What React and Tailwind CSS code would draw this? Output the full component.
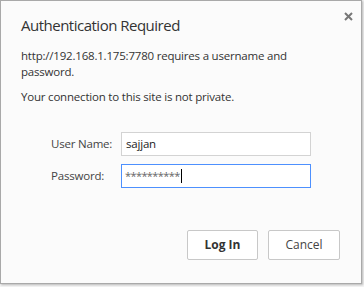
export default function App() {
  const font = { fontFamily: '"Open Sans", "Noto Sans", sans-serif' };
  return (
    <div className="w-[364px] h-[287px] bg-[#f4f4f4] overflow-hidden" style={font}>
      <div className="relative w-[362px] h-[284px] bg-[#fbfbfb] border border-[#a9a9a9] shadow-[1px_1px_2px_rgba(0,0,0,0.25)] flex flex-col">
        <button className="absolute left-[342px] top-[10px] w-[10px] h-[10px] flex items-center justify-center">
          <svg width="9" height="9" viewBox="0 0 9 9">
            <path d="M1 1L8 8M8 1L1 8" stroke="#777" strokeWidth="2" />
          </svg>
        </button>
        <div className="pl-[20px] pt-[13px] text-[15px] leading-[22px] text-[#333] tracking-[-0.5px]">Authentication Required</div>
        <div className="pl-[20px] pt-[12px] pr-[60px] text-[11.5px] leading-[16px] text-[#333] tracking-[-0.2px]">
          http://192.168.1.175:7780 requires a username and password.
        </div>
        <div className="pl-[20px] pt-[9px] text-[11.5px] leading-[16px] text-[#333] tracking-[-0.2px]">
          Your connection to this site is not private.
        </div>
        <div className="pl-[50px] pt-[27px] flex flex-col gap-[8px] text-[11.5px] text-[#444] tracking-[-0.2px]">
          <div className="flex items-center">
            <div className="w-[70px]">User Name:</div>
            <div className="w-[190px] h-[24px] bg-white border border-[#d3d3d3] flex items-center pl-[4px] text-[#222]">sajjan</div>
          </div>
          <div className="flex items-center">
            <div className="w-[70px]">Password:</div>
            <div className="w-[190px] h-[24px] bg-white border border-[#4d90fe] flex items-center pl-[3px] text-[#666]">
              <span className="text-[11px] tracking-[-0.6px]">**********</span>
              <span className="inline-block w-px h-[14px] bg-black ml-[1px]"></span>
            </div>
          </div>
        </div>
        <div className="flex justify-end gap-[10px] pr-[21px] pt-[42px] text-[12px]">
          <button className="w-[71px] h-[30px] bg-white border border-[#c8c8c8] rounded-[2px] font-bold text-[#333]">Log In</button>
          <button className="w-[72px] h-[30px] bg-white border border-[#c8c8c8] rounded-[2px] text-[#444]">Cancel</button>
        </div>
      </div>
    </div>
  );
}
